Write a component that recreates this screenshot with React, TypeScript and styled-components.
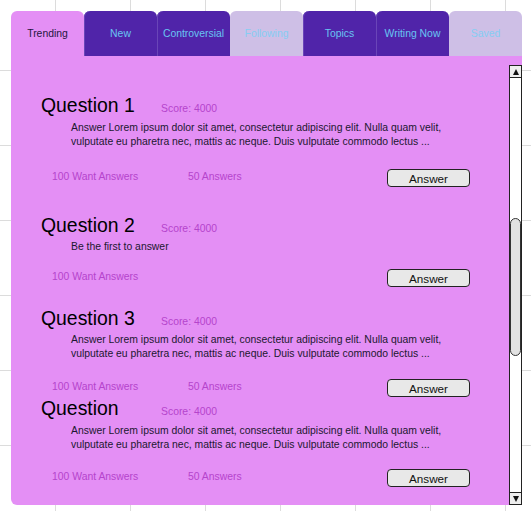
import React from "react";
import styled, { createGlobalStyle } from "styled-components";

const GlobalStyle = createGlobalStyle`
  html, body {
    margin: 0;
    height: 100%;
  }

  body {
    font-family: "Liberation Sans", Arial, sans-serif;
    background-color: #fff;
    background-image: linear-gradient(to right, #dcdcdc 1px, transparent 1px),
      linear-gradient(to bottom, #dcdcdc 1px, transparent 1px);
    background-size: 75px 75px;
    background-position: 55px 70px;
  }
`;

const Widget = styled.div`
  width: 511px;
  padding: 11px 0 0 11px;
`;

const TabBar = styled.nav`
  display: flex;
  height: 45px;
`;

type TabKind = "active" | "dark" | "light";

const tabColors: Record<TabKind, { bg: string; fg: string }> = {
  active: { bg: "#e48ff5", fg: "#231640" },
  dark: { bg: "#5024a9", fg: "#68c4f2" },
  light: { bg: "#cebfe6", fg: "#86cdf3" },
};

const Tab = styled.div<{ $kind: TabKind }>`
  width: 73px;
  display: flex;
  align-items: center;
  justify-content: center;
  padding-bottom: 1px;
  box-sizing: border-box;
  font-size: 10.4px;
  background: ${(p) => tabColors[p.$kind].bg};
  color: ${(p) => tabColors[p.$kind].fg};
  border-radius: 6px 6px 0 0;
  box-shadow: ${(p) =>
    p.$kind === "dark" ? "inset 1px 0 0 #6a45b8" : "none"};
`;

const Panel = styled.div`
  display: flex;
  height: 449px;
  background: #e48ff5;
  border-bottom-left-radius: 6px;
`;

const Feed = styled.main`
  flex: 1;
  padding: 37px 0 0 30px;
  overflow: hidden;
`;

const Item = styled.section<{ $gap: number }>`
  margin-top: ${(p) => p.$gap}px;
`;

const Head = styled.div`
  display: flex;
  align-items: baseline;
`;

const Title = styled.h2`
  margin: 0;
  width: 120px;
  font-size: 19.4px;
  font-weight: normal;
  line-height: 24px;
  color: #000;
`;

const Score = styled.span`
  font-size: 10.4px;
  color: #b544cc;
`;

const Body = styled.p<{ $top: number }>`
  margin: ${(p) => p.$top}px 0 0 30px;
  width: 380px;
  font-size: 10.4px;
  line-height: 14px;
  color: #1b1830;
`;

const Footer = styled.div<{ $gap: number }>`
  display: grid;
  grid-template-columns: 136px 1fr auto;
  align-items: start;
  width: 418px;
  margin: ${(p) => p.$gap}px 0 0 11px;
`;

const Stat = styled.span`
  font-size: 10.4px;
  line-height: 14px;
  margin-top: 1px;
  color: #b544cc;
`;

const AnswerButton = styled.button`
  width: 83px;
  height: 18px;
  padding: 0;
  box-sizing: border-box;
  border: 1.5px solid #222;
  border-radius: 4px;
  background: #e8e8e8;
  font-family: "Liberation Sans", Arial, sans-serif;
  font-size: 11.7px;
  color: #111;
`;

const Scrollbar = styled.div`
  width: 13px;
  margin-top: 9px;
  display: flex;
  flex-direction: column;
  box-sizing: border-box;
  border: 1.5px solid #222;
  background: #fff;
`;

const Arrow = styled.div<{ $up?: boolean }>`
  height: 11px;
  display: flex;
  align-items: center;
  justify-content: center;
  background: #eee;
  border-bottom: ${(p) => (p.$up ? "1.5px solid #222" : "none")};
  border-top: ${(p) => (p.$up ? "none" : "1.5px solid #222")};

  &::after {
    content: "";
    border-left: 3.5px solid transparent;
    border-right: 3.5px solid transparent;
    ${(p) =>
      p.$up ? "border-bottom: 6px solid #111;" : "border-top: 6px solid #111;"}
  }
`;

const Track = styled.div`
  flex: 1;
  display: flex;
  flex-direction: column;
`;

const Thumb = styled.div`
  margin-top: 140px;
  height: 136px;
  background: #e2e2e2;
  border: 1px solid #333;
  border-radius: 6px;
`;

const LOREM =
  "Answer Lorem ipsum dolor sit amet, consectetur adipiscing elit. Nulla quam velit, vulputate eu pharetra nec, mattis ac neque. Duis vulputate commodo lectus ...";

const tabs: { label: string; kind: TabKind }[] = [
  { label: "Trending", kind: "active" },
  { label: "New", kind: "dark" },
  { label: "Controversial", kind: "dark" },
  { label: "Following", kind: "light" },
  { label: "Topics", kind: "dark" },
  { label: "Writing Now", kind: "dark" },
  { label: "Saved", kind: "light" },
];

interface IQuestion {
  title: string;
  body: string;
  answers?: string;
  gap: number;
  bodyTop: number;
  footGap: number;
}

const questions: IQuestion[] = [
  { title: "Question 1", body: LOREM, answers: "50 Answers", gap: 0, bodyTop: 4, footGap: 20 },
  { title: "Question 2", body: "Be the first to answer", gap: 26, bodyTop: 3, footGap: 15 },
  { title: "Question 3", body: LOREM, answers: "50 Answers", gap: 19, bodyTop: 3, footGap: 18 },
  { title: "Question", body: LOREM, answers: "50 Answers", gap: -1, bodyTop: 4, footGap: 17 },
];

export default function App() {
  return (
    <>
      <GlobalStyle />
      <Widget>
        <TabBar>
          {tabs.map((t) => (
            <Tab key={t.label} $kind={t.kind}>
              {t.label}
            </Tab>
          ))}
        </TabBar>
        <Panel>
          <Feed>
            {questions.map((q) => (
              <Item key={q.title} $gap={q.gap}>
                <Head>
                  <Title>{q.title}</Title>
                  <Score>Score: 4000</Score>
                </Head>
                <Body $top={q.bodyTop}>{q.body}</Body>
                <Footer $gap={q.footGap}>
                  <Stat>100 Want Answers</Stat>
                  <Stat>{q.answers}</Stat>
                  <AnswerButton>Answer</AnswerButton>
                </Footer>
              </Item>
            ))}
          </Feed>
          <Scrollbar>
            <Arrow $up />
            <Track>
              <Thumb />
            </Track>
            <Arrow />
          </Scrollbar>
        </Panel>
      </Widget>
    </>
  );
}
